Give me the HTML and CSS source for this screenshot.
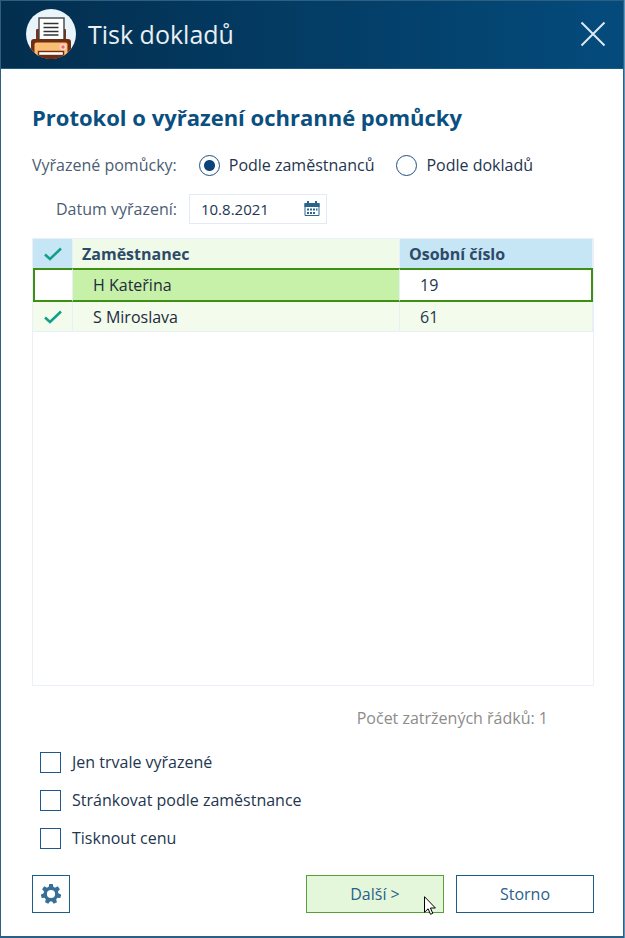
FILE: index.html
```html
<!DOCTYPE html>
<html lang="cs">

<head>
	<meta charset="UTF-8" />
	<meta name="viewport" content="width=device-width, initial-scale=1">
	<title>Tisk dokladů</title>
	<link rel="stylesheet" href="styles.css">
</head>

<body>
	<div class="dialog">
		<header class="titlebar">
			<svg class="logo" viewBox="0 0 50 50" width="50" height="50" aria-hidden="true">
				<clipPath id="disc"><circle cx="25" cy="25" r="25" /></clipPath>
				<g clip-path="url(#disc)">
					<rect width="50" height="50" fill="#e9f4fb" />
					<rect x="10" y="20" width="30" height="12" rx="1" fill="#7a3519" />
					<rect x="13" y="9" width="25" height="24" fill="#fff" stroke="#444" stroke-width="1.4" />
					<path d="M17.500 14.500h15M17.500 18.500h15M17.500 22.500h15M17.500 26h15" stroke="#333" stroke-width="1.500" />
					<path d="M8 30h34q3 0 3 3v17H5V33q0-3 3-3z" fill="#6f2d14" />
					<path d="M10.500 33.500h29q2 0 2 2V47h-33V35.500q0-2 2-2z" fill="#f9bd73" />
					<circle cx="37" cy="38" r="2.500" fill="#f4646c" stroke="#fcd9cc" stroke-width="1.600" />
					<rect x="12.500" y="42.500" width="25" height="4" fill="#fff" stroke="#6f2d14" stroke-width="1.400" />
					<rect y="47" width="50" height="3" fill="#6f2d14" />
				</g>
			</svg>
			<span class="title">Tisk dokladů</span>
			<button class="close" type="button" aria-label="Zavřít">
				<svg viewBox="0 0 26 26" width="26" height="26"><path d="M1.500 1.500l23 23M24.500 1.500l-23 23" /></svg>
			</button>
		</header>

		<form class="content">
			<h1>Protokol o vyřazení ochranné pomůcky</h1>

			<div class="mode" role="radiogroup" aria-labelledby="mode-label">
				<span class="caption" id="mode-label">Vyřazené pomůcky:</span>
				<label class="radio"><input type="radio" name="mode" checked>Podle zaměstnanců</label>
				<label class="radio"><input type="radio" name="mode">Podle dokladů</label>
			</div>

			<div class="date">
				<label class="caption" for="date">Datum vyřazení:</label>
				<div class="date-box">
					<input type="text" id="date" value="10.8.2021">
					<button type="button" aria-label="Kalendář">
						<svg viewBox="0 0 16 16" width="16" height="16">
							<path d="M1 2.500h14v12H1z" fill="none" stroke="#2b648c" />
							<path d="M.5 2h15v4H.5zM3 0h2v3H3zM11 0h2v3h-2z" fill="#2b648c" />
							<path d="M6 7.500h2v2H6zM9 7.500h2v2H9zM12 7.500h1.500v2H12zM3 7.500h2v2H3zM3 11h2v2H3zM6 11h2v2H6zM9 11h2v2H9z" fill="#2b648c" />
						</svg>
					</button>
				</div>
			</div>

			<div class="grid">
				<table>
					<thead>
						<tr>
							<th class="tick"><svg viewBox="0 0 18 14" width="18" height="14" role="img" aria-label="Zatrženo"><path d="M1 7.500l5 4.500L17 1.500" /></svg></th>
							<th class="name">Zaměstnanec</th>
							<th>Osobní číslo</th>
						</tr>
					</thead>
					<tbody>
						<tr class="selected">
							<td class="tick"></td>
							<td class="name">H Kateřina</td>
							<td>19</td>
						</tr>
						<tr>
							<td class="tick"><svg viewBox="0 0 18 14" width="18" height="14" role="img" aria-label="Zatrženo"><path d="M1 7.500l5 4.500L17 1.500" /></svg></td>
							<td class="name">S Miroslava</td>
							<td>61</td>
						</tr>
					</tbody>
				</table>
			</div>

			<p class="count">Počet zatržených řádků: 1</p>

			<div class="options">
				<label><input type="checkbox">Jen trvale vyřazené</label>
				<label><input type="checkbox">Stránkovat podle zaměstnance</label>
				<label><input type="checkbox">Tisknout cenu</label>
			</div>

			<footer>
				<button class="btn settings" type="button" aria-label="Nastavení">
					<svg viewBox="0 0 20 20" width="20" height="20">
						<circle cx="10" cy="10" r="5.800" fill="none" stroke="#376f98" stroke-width="3.400" />
						<g fill="#376f98">
							<path id="tooth" d="M7.500 4L8.200 0h3.600L12.500 4z" />
							<use href="#tooth" transform="rotate(51.400 10 10)" />
							<use href="#tooth" transform="rotate(102.900 10 10)" />
							<use href="#tooth" transform="rotate(154.300 10 10)" />
							<use href="#tooth" transform="rotate(205.700 10 10)" />
							<use href="#tooth" transform="rotate(257.100 10 10)" />
							<use href="#tooth" transform="rotate(308.600 10 10)" />
						</g>
					</svg>
				</button>
				<button class="btn next" type="button">Další &gt;
					<svg class="cursor" viewBox="0 0 12 19" width="12" height="19" aria-hidden="true"><path d="M.5.7v15.600l3.600-3.500 2.400 5.500 2.300-1-2.400-5.300h5z" /></svg>
				</button>
				<button class="btn" type="button">Storno</button>
			</footer>
		</form>
	</div>
</body>

</html>
```
FILE: styles.css
```css
* { box-sizing: border-box; }

body {
	margin: 0; padding-right: 1px;
	background: #5b94bb;
	font-family: "Open Sans", "Noto Sans", sans-serif;
	font-size: 16px; line-height: 24px;
	color: #24354f;
}

button, input { font: inherit; color: inherit; margin: 0; }
button { cursor: pointer; }
svg { display: block; }

.dialog {
	display: flex; flex-direction: column;
	min-height: 100vh;
	background: #fff;
	border: 1px solid #2d5f82;
	border-bottom: 2px solid #2d5f82;
}

/* Title bar */
.titlebar {
	display: flex; align-items: center; gap: 12px;
	height: 68px; padding: 0 17px 2px 25px;
	background: linear-gradient(90deg, #032e4e, #044b7c);
	border-bottom: 1px solid #1c5a86;
}

.title { flex: 1; font-size: 25px; line-height: 34px; color: #e8eff5; }

.close { padding: 0; border: 0; background: none; }
.close path { fill: none; stroke: #dce8f2; stroke-width: 2; }

/* Form */
.content {
	flex: 1; display: flex; flex-direction: column;
	padding: 32px 29px 23px 31px;
}

h1 { margin: 0; font-size: 22px; line-height: 32px; font-weight: 700; color: #0b4f80; }

.caption { color: #4b5c74; }

.mode { display: flex; align-items: center; gap: 22px; margin-top: 20px; }
.radio { display: flex; align-items: center; gap: 9px; }

.radio input {
	appearance: none;
	width: 21px; height: 21px;
	border: 1px solid #1d4f82; border-radius: 50%;
}

.radio input:checked { background: radial-gradient(circle, #0c4379 5px, transparent 6px); }

.date { display: flex; align-items: center; gap: 12px; margin: 17px 0 14px 24px; }

.date-box {
	display: flex; align-items: center;
	width: 138px; height: 30px; padding: 0 6px 0 11px;
	border: 1px solid #e3e9f7;
}

.date-box input { flex: 1; min-width: 0; padding: 0; border: 0; outline: 0; background: none; font-size: 15px; }
.date-box button { padding: 0; border: 0; background: none; }

/* Employee grid */
.grid { flex: 1; border: 1px solid #ebeff8; }

table { width: 100%; border-collapse: separate; border-spacing: 0; table-layout: fixed; }

th, td {
	height: 30px; padding: 0 0 0 20px;
	text-align: left; font-weight: 400;
	border-right: 1px solid #e9eef8;
}

td { background: #f3fbec; border-bottom: 1px solid #e9eef8; }
th { height: 29px; padding-left: 9px; font-weight: 700; color: #2d4a68; background: #c6e5f5; }
th.name { background: #f0fae8; }
.name { width: 327px; }
td.name { color: #1d2b3d; }
.tick { width: 40px; padding: 0; }
.tick svg { margin: 0 auto; }
.tick path { fill: none; stroke: #10a08a; stroke-width: 2.5; }

.selected td {
	height: 34px;
	background: #fff;
	border-top: 2px solid #3f8f13; border-bottom: 2px solid #3f8f13;
}

.selected td:first-child { border-left: 2px solid #3f8f13; }
.selected td:last-child { border-right: 2px solid #3f8f13; }
.selected .name { background: #c7f1a8; }

.count { margin: 20px 46px 20px 0; text-align: right; color: #8c8c8c; }

.options { display: flex; flex-direction: column; gap: 14px; padding-left: 8px; }
.options label { display: flex; align-items: center; gap: 11px; align-self: flex-start; }

.options input {
	appearance: none;
	width: 21px; height: 21px;
	border: 1px solid #1d5890;
}

/* Buttons */
footer { display: flex; gap: 12px; margin-top: 25px; }

.btn {
	position: relative;
	width: 138px; height: 38px; padding: 0;
	border: 1px solid #1d5d8a;
	background: #fff; color: #2b5f8c;
}

.settings { display: flex; align-items: center; justify-content: center; width: 38px; margin-right: auto; }
.next { background: #e5f7da; border-color: #5a9e37; }

/* Pointer resting on the default button */
.cursor { position: absolute; right: 7px; bottom: -3px; }
.cursor path { fill: #fff; stroke: #000; }
```
